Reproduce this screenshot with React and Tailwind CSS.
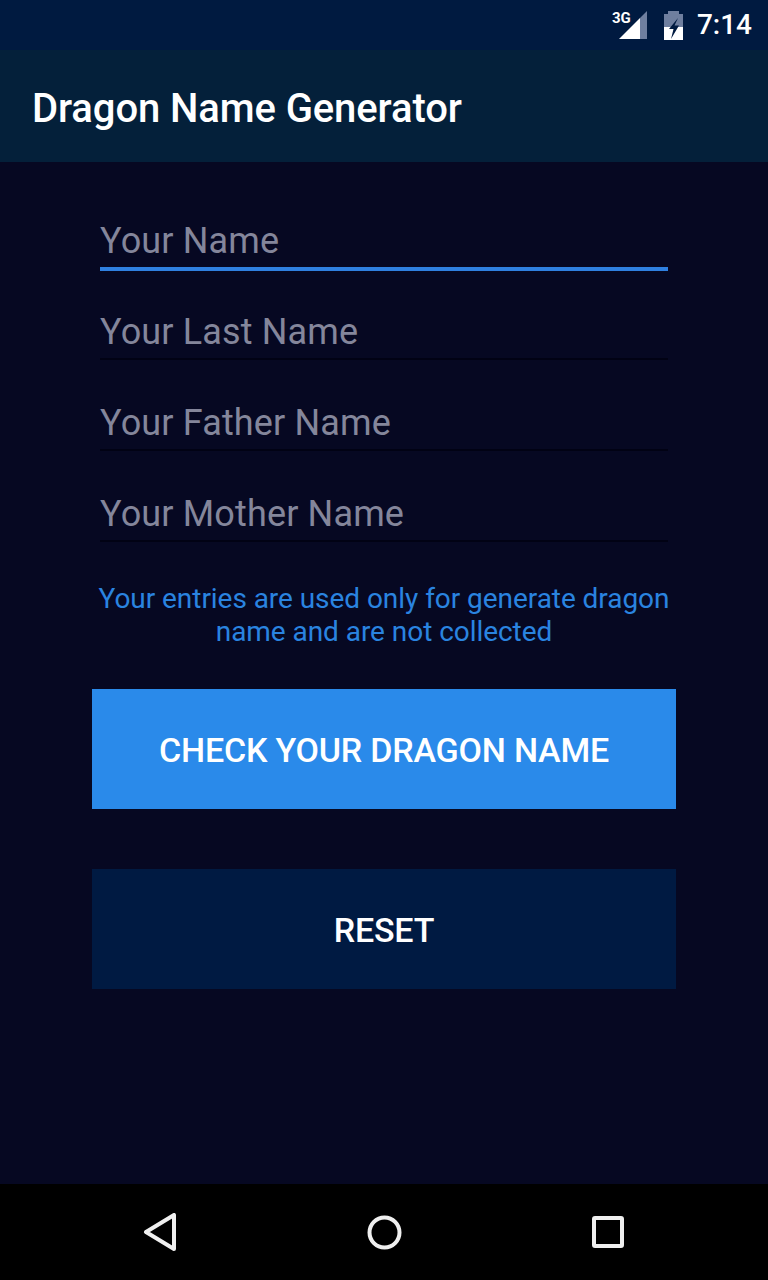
function Field({ placeholder, active }) {
  return (
    <div className="h-[91px] pt-[11px]">
      <div className="h-[52px] flex items-center text-[36px] leading-none tracking-[0.15px] text-[#84869b]">{placeholder}</div>
      {active ? <div className="h-1 bg-[#2f80e0]" /> : <div className="h-0.5 bg-[#010214]" />}
    </div>
  );
}

function StatusBar() {
  return (
    <div className="h-[50px] bg-[#001a40] flex items-center justify-end pr-4 relative">
      <span className="absolute left-[612px] top-[11px] text-[15px] leading-none font-bold text-white">3G</span>
      <svg width="28" height="28" viewBox="0 0 28 28" className="mr-[17px]">
        <path d="M28 0V28H21V7Z" fill="#6f7f9f" />
        <path d="M21 7V28H0Z" fill="#fff" />
      </svg>
      <svg width="19" height="29" viewBox="0 0 19 29" className="mr-[14px]">
        <path d="M4 0H15V3H19V16H0V3H4Z" fill="#6f7f9f" />
        <path d="M0 16H19V29H0Z" fill="#fff" />
        <path d="M14 7L5 18H9.5L7 28L15 14.5H10.5Z" fill="#001a40" />
      </svg>
      <span className="text-[28px] font-medium text-white leading-none">7:14</span>
    </div>
  );
}

function NavBar() {
  return (
    <div className="h-24 bg-black flex items-center pl-[143px] pr-[144px] justify-between">
      <svg width="34" height="38" viewBox="0 0 34 38" fill="none" stroke="#f0f0f0" strokeWidth="4" strokeLinejoin="round">
        <path d="M31 2V36L3 19Z" />
      </svg>
      <svg width="35" height="35" viewBox="0 0 35 35" fill="none" stroke="#f0f0f0" strokeWidth="4">
        <circle cx="17.5" cy="17.5" r="15" />
      </svg>
      <svg width="32" height="32" viewBox="0 0 32 32" fill="none" stroke="#f0f0f0" strokeWidth="4" strokeLinejoin="round">
        <rect x="2" y="2" width="28" height="28" rx="1" />
      </svg>
    </div>
  );
}

export default function App() {
  return (
    <div className="w-[768px] h-[1280px] flex flex-col bg-[#060822] font-['Roboto',sans-serif]">
      <StatusBar />
      <div className="h-[112px] bg-[#04203a] flex items-center pl-8 pt-1.5 text-[40px] tracking-[-0.1px] font-medium text-white">
        Dragon Name Generator
      </div>
      <div className="flex-1 px-[92px] pt-[42px]">
        <div className="px-2">
          <Field placeholder="Your Name" active />
          <Field placeholder="Your Last Name" />
          <Field placeholder="Your Father Name" />
          <Field placeholder="Your Mother Name" />
        </div>
        <p className="mt-[14px] text-center text-[28px] leading-[33px] tracking-[-0.05px] text-[#2a84e0]">
          Your entries are used only for generate dragon name and are not collected
        </p>
        <button className="mt-[41px] block w-full h-[120px] pt-0.5 bg-[#2a8aea] text-white text-[34px] tracking-[-0.2px] font-medium">
          CHECK YOUR DRAGON NAME
        </button>
        <button className="mt-[60px] block w-full h-[120px] pt-0.5 bg-[#001a42] text-white text-[34px] tracking-[-0.2px] font-medium">
          RESET
        </button>
      </div>
      <NavBar />
    </div>
  );
}
